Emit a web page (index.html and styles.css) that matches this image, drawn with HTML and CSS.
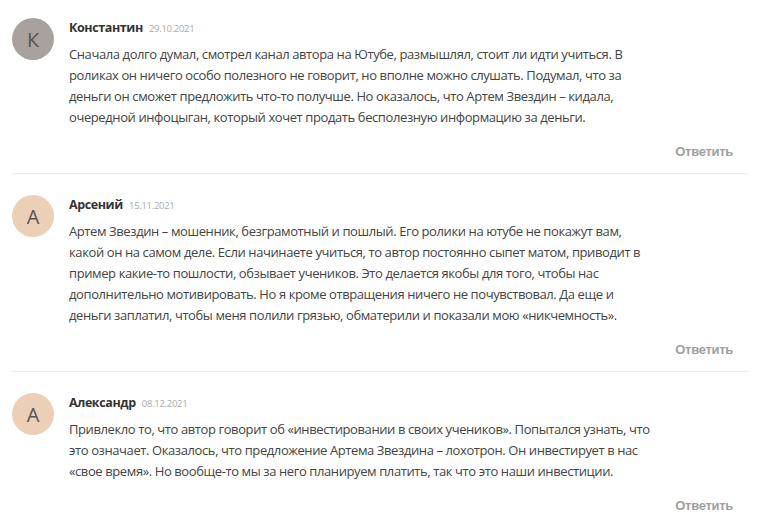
FILE: index.html
```html
<!DOCTYPE html>
<html lang="ru">
<head>
    <meta charset="UTF-8">
    <title>Отзывы</title>
    <link rel="stylesheet" href="styles.css">
</head>
<body>
    <div class="comments">
        <div class="comment">
            <div class="avatar avatar-grey">К</div>
            <div class="comment-body">
                <div class="comment-meta">
                    <span class="author">Константин</span>
                    <span class="date">29.10.2021</span>
                </div>
                <p class="comment-text">Сначала долго думал, смотрел канал автора на Ютубе, размышлял, стоит ли идти учиться. В роликах он ничего особо полезного не говорит, но вполне можно слушать. Подумал, что за деньги он сможет предложить что-то получше. Но оказалось, что Артем Звездин – кидала, очередной инфоцыган, который хочет продать бесполезную информацию за деньги.</p>
                <div class="comment-footer">
                    <a class="reply-link" href="#">Ответить</a>
                </div>
            </div>
        </div>
        <div class="comment">
            <div class="avatar avatar-peach">А</div>
            <div class="comment-body">
                <div class="comment-meta">
                    <span class="author">Арсений</span>
                    <span class="date">15.11.2021</span>
                </div>
                <p class="comment-text">Артем Звездин – мошенник, безграмотный и пошлый. Его ролики на ютубе не покажут вам, какой он на самом деле. Если начинаете учиться, то автор постоянно сыпет матом, приводит в пример какие-то пошлости, обзывает учеников. Это делается якобы для того, чтобы нас дополнительно мотивировать. Но я кроме отвращения ничего не почувствовал. Да еще и деньги заплатил, чтобы меня полили грязью, обматерили и показали мою «никчемность».</p>
                <div class="comment-footer">
                    <a class="reply-link" href="#">Ответить</a>
                </div>
            </div>
        </div>
        <div class="comment">
            <div class="avatar avatar-peach">А</div>
            <div class="comment-body">
                <div class="comment-meta">
                    <span class="author">Александр</span>
                    <span class="date">08.12.2021</span>
                </div>
                <p class="comment-text">Привлекло то, что автор говорит об «инвестировании в своих учеников». Попытался узнать, что это означает. Оказалось, что предложение Артема Звездина – лохотрон. Он инвестирует в нас «свое время». Но вообще-то мы за него планируем платить, так что это наши инвестиции.</p>
                <div class="comment-footer">
                    <a class="reply-link" href="#">Ответить</a>
                </div>
            </div>
        </div>
    </div>
</body>
</html>
```

FILE: styles.css
```css
body {
    margin: 0;
    background-color: #fff;
    font-family: 'Open Sans', sans-serif;
    color: #444;
}
.comments {
    margin: 0 11px 0 12px;
}
.comment {
    display: flex;
    align-items: flex-start;
    padding: 21px 0 13px 0;
    border-bottom: 1px solid #eeeeee;
}
.comment:first-child {
    padding-top: 18px;
}
.avatar {
    flex: 0 0 42px;
    width: 42px;
    height: 42px;
    border-radius: 50%;
    display: flex;
    justify-content: center;
    align-items: center;
    font-size: 20px;
    color: #555;
}
.avatar-grey {
    background-color: #a9a19d; /* greyish avatar */
}
.avatar-peach {
    background-color: #eccfb7; /* peach avatar */
}
.comment-body {
    flex: 1;
    margin-left: 15px;
}
.comment-meta {
    line-height: 16px;
    height: 16px;
}
.author {
    font-size: 12.5px;
    font-weight: bold;
    letter-spacing: -0.4px;
    color: #333;
}
.date {
    font-size: 9.5px;
    letter-spacing: -0.3px;
    color: #aaa;
    margin-left: 2px;
}
.comment-text {
    margin: 10px 0 0 0;
    max-width: 586px;
    font-size: 13px;
    letter-spacing: -0.4px;
    line-height: 21px;
}
.comment-footer {
    display: flex;
    justify-content: flex-end;
    margin-top: 16px;
    padding-right: 15px;
    line-height: 16px;
}
.reply-link {
    font-family: 'Liberation Sans', Arial, sans-serif;
    font-size: 13px;
    font-weight: bold;
    letter-spacing: -0.3px;
    color: #a0a0a0;
    text-decoration: none;
}
```
